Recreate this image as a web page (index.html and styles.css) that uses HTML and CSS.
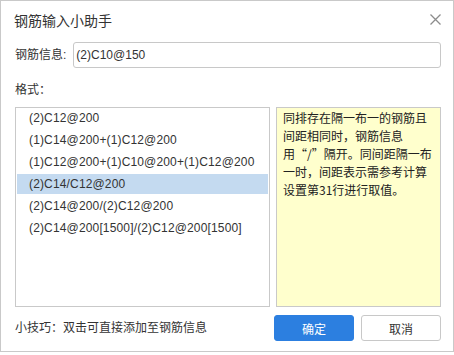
FILE: index.html
```html
<!doctype html>
<html lang="zh-CN">
<head>
  <meta charset="UTF-8" />
  <title>钢筋输入小助手</title>
  <link rel="stylesheet" href="styles.css">
</head>
<body>
  <div class="dialog">
    <div class="title-bar">
      <span class="title">钢筋输入小助手</span>
      <span class="close">
        <svg width="11" height="11" viewBox="0 0 11 11"><path d="M0.5 0.5 L10.5 10.5 M10.5 0.5 L0.5 10.5" stroke="#8c8c8c" stroke-width="1.3" fill="none"/></svg>
      </span>
    </div>
    <div class="field">
      <label for="info">钢筋信息:</label>
      <input id="info" type="text" value="(2)C10@150" />
    </div>
    <div class="section-label">格式：</div>
    <div class="panes">
      <ul class="formats">
        <li>(2)C12@200</li>
        <li>(1)C14@200+(1)C12@200</li>
        <li>(1)C12@200+(1)C10@200+(1)C12@200</li>
        <li class="selected">(2)C14/C12@200</li>
        <li>(2)C14@200/(2)C12@200</li>
        <li>(2)C14@200[1500]/(2)C12@200[1500]</li>
      </ul>
      <div class="note">
        同排存在隔一布一的钢筋且<br>间距相同时，钢筋信息<br>用“/”隔开。同间距隔一布<br>一时，间距表示需参考计算<br>设置第31行进行取值。
      </div>
    </div>
    <div class="footer">
      <span class="tip">小技巧：双击可直接添加至钢筋信息</span>
      <button class="btn primary">确定</button>
      <button class="btn">取消</button>
    </div>
  </div>
</body>
</html>
```

FILE: styles.css
```css
html, body {
  margin: 0;
  padding: 0;
  background: #fff;
  font-family: "Liberation Sans", "Noto Sans CJK SC", sans-serif;
  font-size: 12px;
  color: #333;
}
.dialog {
  box-sizing: border-box;
  width: 454px;
  height: 352px;
  border: 1px solid #c9c9c9;
  padding: 0 12px 0 13px;
  display: flex;
  flex-direction: column;
}
.title-bar {
  height: 38px;
  display: flex;
  align-items: center;
  justify-content: space-between;
}
.title {
  font-family: "Noto Sans CJK SC", sans-serif;
  font-size: 14px;
  color: #333;
  line-height: 20px;
}
.close {
  display: flex;
  width: 11px;
  height: 11px;
  margin-top: -1px;
}
.field {
  margin-top: 3px;
  display: flex;
  align-items: center;
  gap: 7px;
}
.field label {
  line-height: 20px;
  padding-left: 1px;
  color: #333;
}
.field input {
  flex: 1;
  box-sizing: border-box;
  height: 26px;
  margin: 0;
  border: 1px solid #c8c8c8;
  border-radius: 3px;
  padding: 0 2px;
  font: inherit;
  font-size: 12px;
  color: #333;
  outline: none;
}
.section-label {
  margin-top: 12px;
  line-height: 20px;
  padding-left: 1px;
}
.panes {
  margin-top: 7px;
  height: 200px;
  display: flex;
  gap: 6px;
  padding-left: 1px;
}
.formats {
  box-sizing: border-box;
  width: 255px;
  margin: 0;
  padding: 0 1px;
  list-style: none;
  border: 1px solid #c9c9c9;
}
.formats li {
  height: 20px;
  line-height: 20px;
  margin-bottom: 2px;
  padding-left: 12px;
  color: #333;
  letter-spacing: 0.15px;
}
.formats li.selected {
  background: #c4daf0;
}
.note {
  flex: 1;
  box-sizing: border-box;
  border: 1px solid #c9c9c9;
  background: #ffffcd;
  padding: 1px 2px 0 6px;
  line-height: 18px;
  font-family: "Noto Sans CJK SC", sans-serif;
  color: #222;
}
.footer {
  margin-top: 8px;
  display: flex;
  align-items: center;
  gap: 7px;
  padding-left: 1px;
}
.tip {
  flex: 1;
  line-height: 20px;
  color: #333;
}
.btn {
  box-sizing: border-box;
  width: 80px;
  height: 26px;
  margin: 0;
  border: 1px solid #c8c8c8;
  border-radius: 3px;
  background: #fff;
  font: inherit;
  font-size: 12px;
  color: #333;
  padding: 0;
}
.btn.primary {
  background: #2c7fe0;
  border-color: #2c7fe0;
  color: #fff;
}
```
